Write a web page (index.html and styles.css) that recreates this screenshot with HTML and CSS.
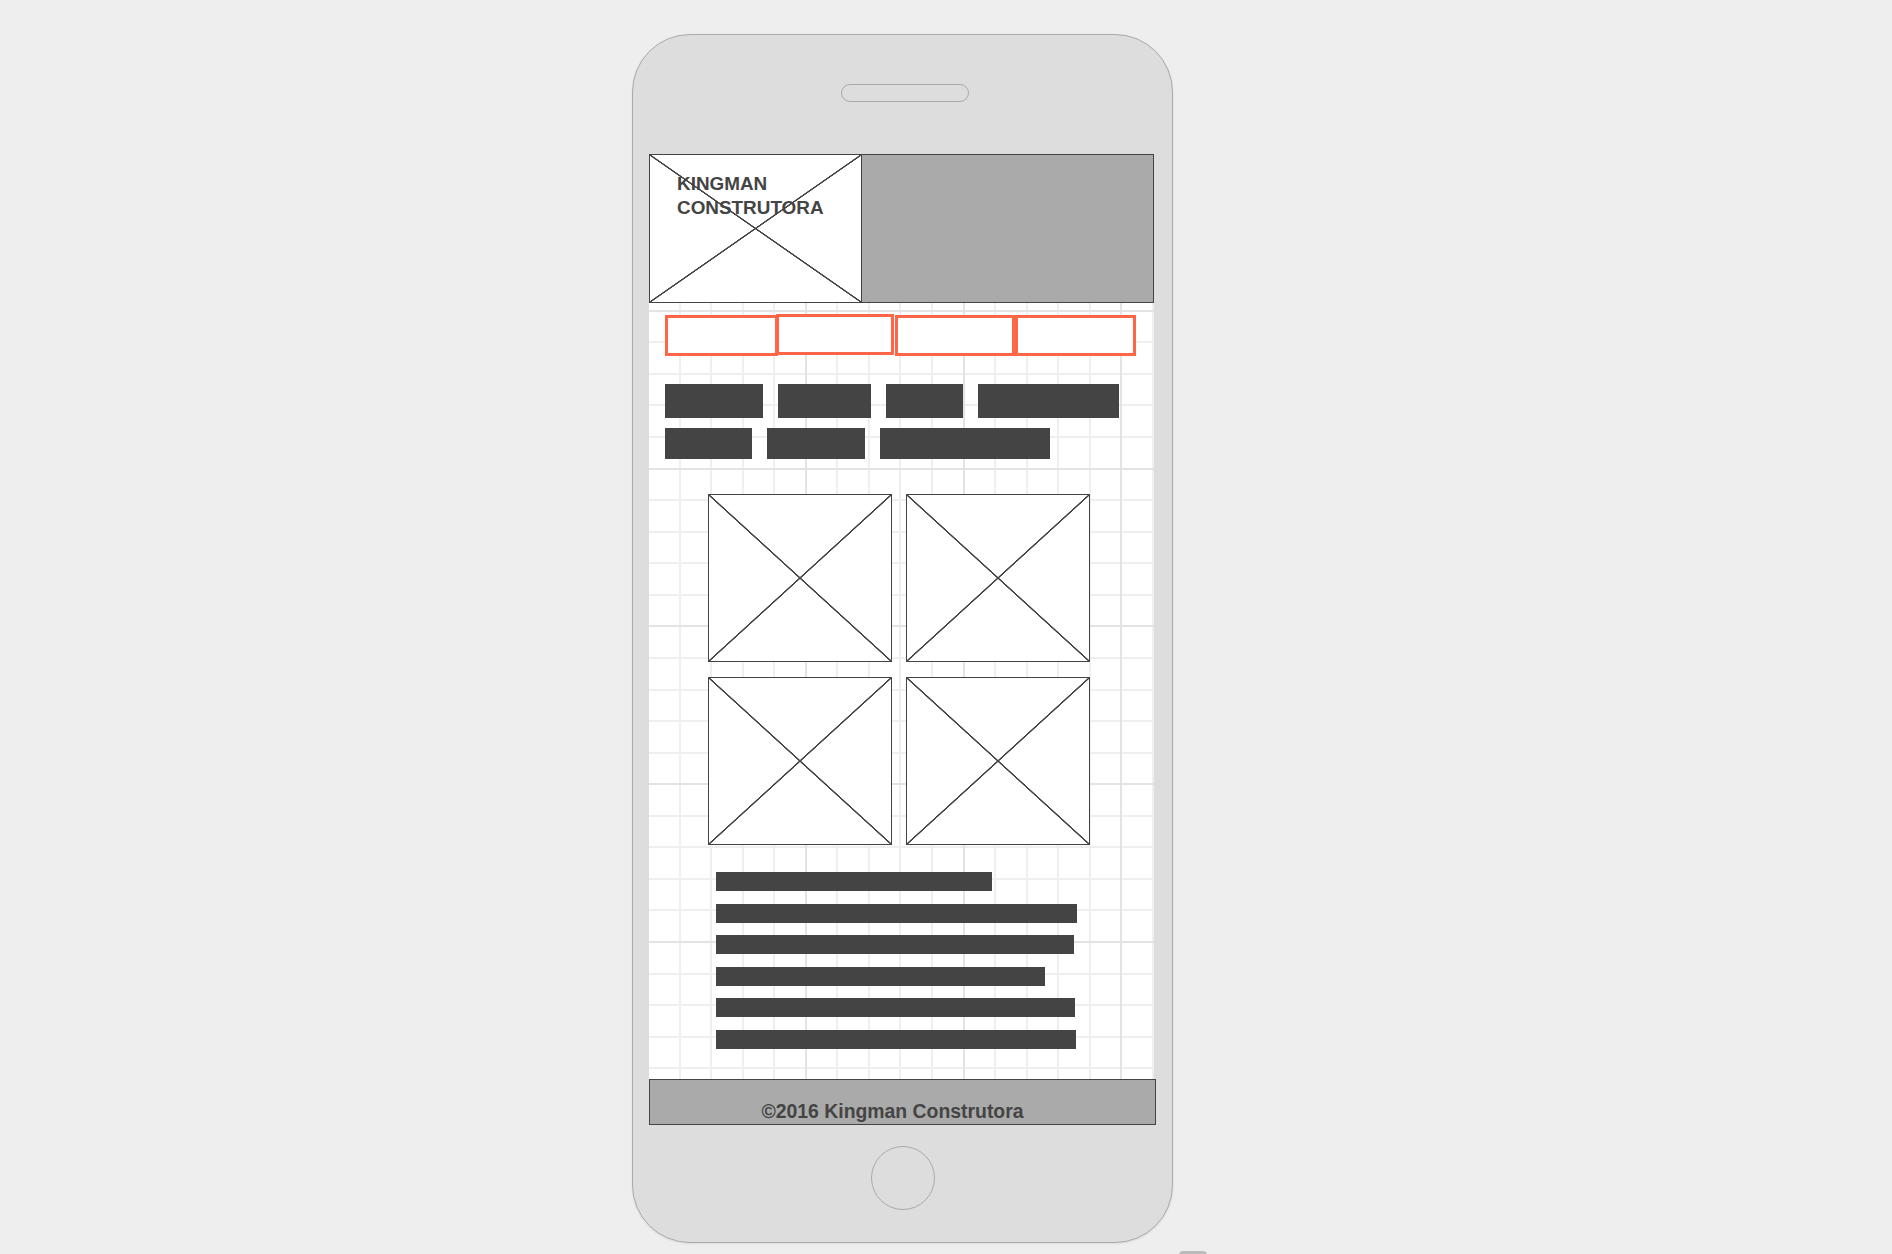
FILE: index.html
```html
<!DOCTYPE html>
<html lang="pt">
<head>
  <meta charset="UTF-8">
  <title>Kingman Construtora - Mobile</title>
  <link rel="stylesheet" href="styles.css">
</head>
<body>

  <div class="phone">
    <div class="speaker"></div>

    <div class="screen">
      <header class="top">
        <div class="logo placeholder">
          <span class="brand">KINGMAN<br>CONSTRUTORA</span>
        </div>
        <div class="banner"></div>
      </header>

      <nav class="menu">
        <a class="menu-item m1"></a>
        <a class="menu-item m2"></a>
        <a class="menu-item m3"></a>
        <a class="menu-item m4"></a>
      </nav>

      <div class="tags">
        <div class="tag-row first">
          <span class="tag" style="width:98px"></span>
          <span class="tag" style="width:93px"></span>
          <span class="tag" style="width:77px"></span>
          <span class="tag" style="width:141px"></span>
        </div>
        <div class="tag-row">
          <span class="tag" style="width:87px"></span>
          <span class="tag" style="width:98px"></span>
          <span class="tag" style="width:170px"></span>
        </div>
      </div>

      <div class="gallery">
        <div class="photo placeholder"></div>
        <div class="photo placeholder"></div>
        <div class="photo placeholder"></div>
        <div class="photo placeholder"></div>
      </div>

      <div class="lines">
        <span class="line" style="width:276px"></span>
        <span class="line" style="width:361px"></span>
        <span class="line" style="width:358px"></span>
        <span class="line" style="width:329px"></span>
        <span class="line" style="width:359px"></span>
        <span class="line" style="width:360px"></span>
      </div>
    </div>

    <footer class="foot">©2016 Kingman Construtora</footer>

    <div class="home"></div>
  </div>

  <div class="handle"></div>

</body>
</html>
```

FILE: styles.css
```css
* {
  box-sizing: border-box;
}

body {
  margin: 0;
  height: 1254px;
  overflow: hidden;
  background: #eeeeee;
  font-family: "Liberation Sans", Arial, sans-serif;
  color: #444;
}

/* phone frame */
.phone {
  width: 541px;
  height: 1209px;
  margin: 34px 0 0 632px;
  padding: 0 0 0 16px;
  background: #dddddd;
  border: 1px solid #aaaaaa;
  border-radius: 58px;
  box-shadow: 0 1px 2px rgba(0,0,0,0.08);
}

.speaker {
  width: 128px;
  height: 18px;
  margin: 49px 0 52px 192px;
  border: 1px solid #aaaaaa;
  border-radius: 9px;
}

.home {
  width: 64px;
  height: 64px;
  margin: 21px 0 0 222px;
  border: 1px solid #aaaaaa;
  border-radius: 50%;
}

.handle {
  width: 28px;
  height: 10px;
  margin: 8px 0 0 1179px;
  background: #bbbbbb;
  border-radius: 4px 4px 0 0;
}

/* screen with the wireframe grid */
.screen {
  width: 505px;
  height: 925px;
  background-color: #fff;
  background-image:
    repeating-linear-gradient(to right, transparent 0 155.8px, #e3e3e3 155.8px 157.8125px),
    repeating-linear-gradient(to bottom, transparent 0 155.8px, #e3e3e3 155.8px 157.8125px),
    repeating-linear-gradient(to right, transparent 0 29.56px, #efefef 29.56px 31.5625px),
    repeating-linear-gradient(to bottom, transparent 0 29.56px, #efefef 29.56px 31.5625px);
}

.placeholder {
  background-color: #fff;
  background-image:
    linear-gradient(to top right, transparent calc(50% - 1px), #444 calc(50% - 0.5px), #444 calc(50% + 0.5px), transparent calc(50% + 1px)),
    linear-gradient(to bottom right, transparent calc(50% - 1px), #444 calc(50% - 0.5px), #444 calc(50% + 0.5px), transparent calc(50% + 1px));
}

.top {
  display: flex;
  height: 149px;
  border: 1px solid #444;
}

.logo {
  width: 212px;
  border-right: 1px solid #444;
  padding: 17px 0 0 27px;
}

.brand {
  display: block;
  font-size: 18.9px;
  line-height: 24px;
  font-weight: bold;
  color: #444;
}

.banner {
  flex: 1;
  background: #aaaaaa;
}

/* nav */
.menu {
  display: flex;
  margin: 12px 0 0 16px;
}

.menu-item {
  display: block;
  height: 41px;
  border: 3px solid #ff6647;
  background: #fff;
}

.m1 { width: 113px; }
.m2 { width: 118px; margin-left: -2px; margin-top: -1px; }
.m3 { width: 120px; margin-left: 1px; }
.m4 { width: 121px; }

/* tags */
.tags {
  margin: 28px 0 0 16px;
}

.tag-row {
  display: flex;
  gap: 15px;
  margin-top: 10px;
}

.tag-row.first {
  margin-top: 0;
}

.tag {
  display: block;
  height: 31px;
  background: #444;
}

.tag-row.first .tag {
  height: 34px;
}

/* pictures */
.gallery {
  display: grid;
  grid-template-columns: 184px 184px;
  column-gap: 14px;
  row-gap: 15px;
  margin: 35px 0 0 59px;
}

.photo {
  height: 168px;
  border: 1px solid #444;
}

/* text lines */
.lines {
  display: flex;
  flex-direction: column;
  align-items: flex-start;
  gap: 12.5px;
  margin: 27px 0 0 67px;
}

.line {
  display: block;
  height: 19px;
  background: #444;
}

/* footer */
.foot {
  width: 507px;
  height: 46px;
  padding: 20px 20px 0 0;
  background: #aaaaaa;
  border: 1px solid #444;
  font-size: 19.4px;
  line-height: 22px;
  font-weight: bold;
  text-align: center;
  color: #444;
}
```
